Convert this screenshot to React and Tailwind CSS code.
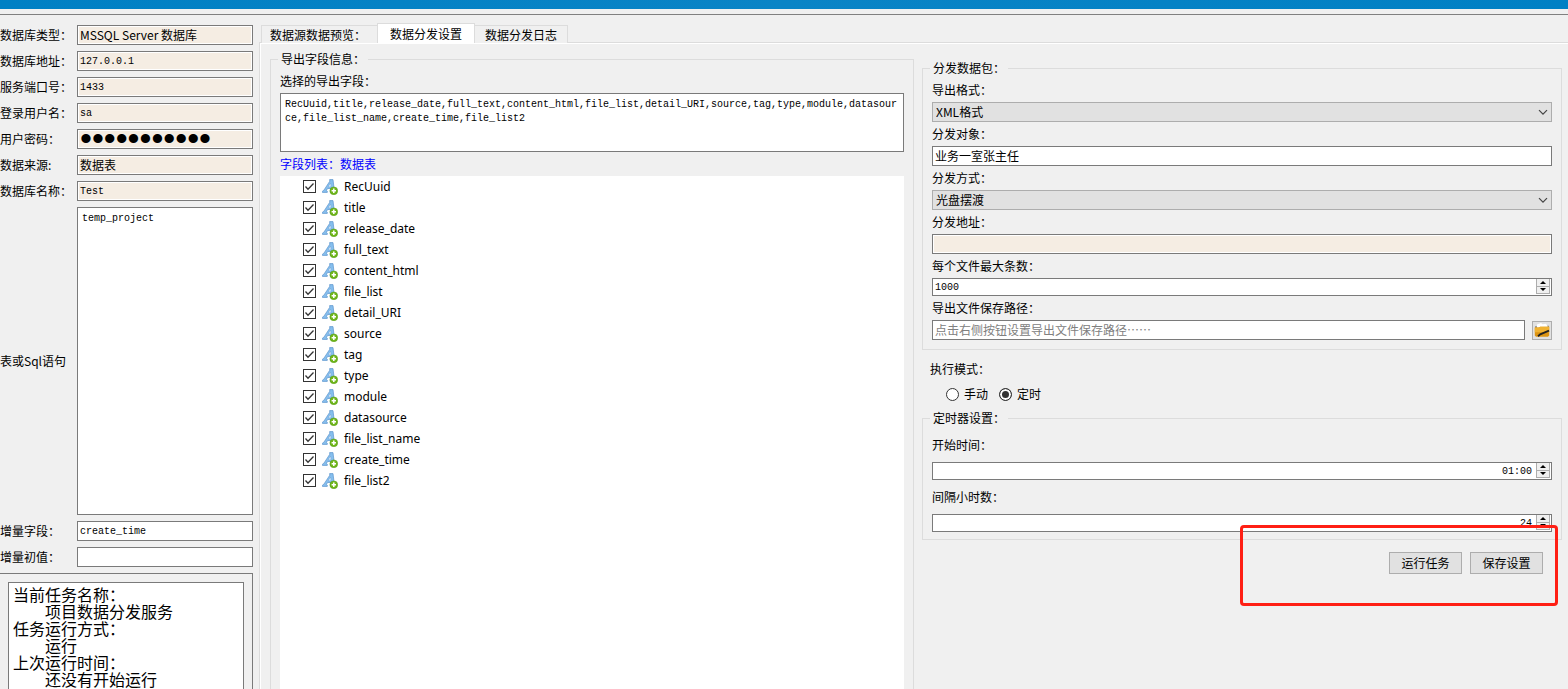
import { useState } from "react";
import clsx from "clsx";

const connectionFields = [
  { id: "dbType", label: "数据库类型：", value: "MSSQL Server 数据库" },
  { id: "dbHost", label: "数据库地址：", value: "127.0.0.1", mono: true },
  { id: "dbPort", label: "服务端口号：", value: "1433", mono: true },
  { id: "dbUser", label: "登录用户名：", value: "sa", mono: true },
  { id: "dbPassword", label: "用户密码：", value: "12345678901", type: "password" },
  { id: "dbSource", label: "数据来源:", value: "数据表" },
  { id: "dbName", label: "数据库名称：", value: "Test", mono: true },
];

const exportFields = [
  "RecUuid",
  "title",
  "release_date",
  "full_text",
  "content_html",
  "file_list",
  "detail_URI",
  "source",
  "tag",
  "type",
  "module",
  "datasource",
  "file_list_name",
  "create_time",
  "file_list2",
];

const taskStatus = [
  { title: "当前任务名称：", value: "项目数据分发服务" },
  { title: "任务运行方式：", value: "运行" },
  { title: "上次运行时间：", value: "还没有开始运行" },
];

const tabs = [
  { name: "数据源数据预览：", className: "h-[18px] border-l pl-2 pr-[11px]" },
  { name: "数据分发设置", className: "h-5 px-3" },
  { name: "数据分发日志", className: "h-[18px] border-r px-[10px]" },
];

const MONO = "font-['Liberation_Mono','Noto_Sans_CJK_SC',monospace] text-[10px]";
const LABEL = "block leading-[18px]";

function TextField({ className, mono, readOnly, ...props }) {
  return (
    <input
      {...props}
      readOnly={readOnly}
      className={clsx(
        "block h-5 w-full min-w-0 border border-[#7a7a7a] px-[2px] outline-none placeholder:text-[#808080]",
        readOnly ? "bg-[#f5ede3] shadow-[inset_0_0_0_1px_#fff]" : "bg-white",
        mono ? [MONO, "pt-px"] : "pb-[2px]",
        className
      )}
    />
  );
}

function SelectField({ id, options }) {
  return (
    <div className="relative">
      <select
        id={id}
        className="block h-5 w-full appearance-none border border-[#adadad] bg-[#e1e1e1] px-[3px] leading-[18px] outline-none"
      >
        {options.map((option) => (
          <option key={option}>{option}</option>
        ))}
      </select>
      <svg
        className="pointer-events-none absolute right-1 top-[7px]"
        width="10"
        height="7"
        viewBox="0 0 10 7"
        fill="none"
        stroke="#444"
        strokeWidth="1.2"
      >
        <path d="M1 1.2 5 5.2 9 1.2" />
      </svg>
    </div>
  );
}

function SpinField({ id, defaultValue, alignRight }) {
  return (
    <div className="flex h-[18px] border border-[#7a7a7a] bg-white pb-px pr-px">
      <input
        id={id}
        defaultValue={defaultValue}
        className={clsx(
          "min-w-0 flex-1 bg-transparent px-[2px] pt-[2px] outline-none",
          MONO,
          alignRight && "pr-1 text-right"
        )}
      />
      <div className="flex w-[14px] flex-col border-x border-b border-[#adadad] bg-[#f0f0f0]">
        <button type="button" aria-label="增加" className="flex flex-1 items-center justify-center">
          <svg width="6" height="3" viewBox="0 0 6 3">
            <path d="M0 3 3 0 6 3Z" />
          </svg>
        </button>
        <button
          type="button"
          aria-label="减少"
          className="flex flex-1 items-center justify-center border-t border-[#adadad]"
        >
          <svg width="6" height="3" viewBox="0 0 6 3">
            <path d="M0 0 3 3 6 0Z" />
          </svg>
        </button>
      </div>
    </div>
  );
}

function FontAddIcon() {
  return (
    <svg width="16" height="16" viewBox="0 0 16 16">
      <path
        d="M7.6.6H11l1.3 10.6 1.4 1v1.2H8.2v-1.2l1-.8-.2-1.9H5.6l-1.2 1.9.9.8v1.2H.4v-1.2l1.5-1L7.8 2.2Z"
        fill="#86bfee"
        stroke="#5b93cb"
        strokeWidth=".7"
      />
      <path d="M8.6 4 6.4 7.8h2.5Z" fill="#fff" stroke="#5b93cb" strokeWidth=".4" />
      <circle cx="11.8" cy="11.8" r="3.9" fill="#70b61a" stroke="#539a10" strokeWidth=".5" />
      <path d="M11.8 9.6V14M9.6 11.8H14" stroke="#fff" strokeWidth="1.5" />
    </svg>
  );
}

function FolderIcon() {
  return (
    <svg width="16" height="16" viewBox="0 0 16 16">
      <path d="M1 4.2h2v2H1ZM13 3.8h2v2h-2Z" fill="#8a8a8a" />
      <path d="M3 2.6 7 1l1.5 1.2 3.5-.4 1.6 2.4V8H3Z" fill="#fff" />
      <path d="M.8 5.6h4l1.4-.8h9v8.8l-1.2 1.2H2L.8 13.6Z" fill="#dc9413" />
      <path d="M.8 5.6h4l1.4-.8h9v5.4H.8Z" fill="#f0b232" />
      <path d="M4 14.2 6.2 12.4 15 8.6" fill="none" stroke="#222" strokeWidth="1.8" />
    </svg>
  );
}

function FieldItem({ name }) {
  const [checked, setChecked] = useState(true);

  return (
    <li>
      <label className="flex h-[21px] items-center pl-[23px] font-['Noto_Sans',sans-serif] text-[12px]">
        <input
          type="checkbox"
          checked={checked}
          onChange={() => setChecked(!checked)}
          className="peer size-[13px] appearance-none border border-[#333] bg-white"
        />
        <svg
          className="pointer-events-none invisible -ml-[13px] peer-checked:visible"
          width="13"
          height="13"
          viewBox="0 0 13 13"
          fill="none"
          stroke="#333"
          strokeWidth="1.3"
        >
          <path d="M2.5 6.5 5 9.2 10.5 3.5" />
        </svg>
        <span className="ml-[6px] mr-[6px]">
          <FontAddIcon />
        </span>
        {name}
      </label>
    </li>
  );
}

function Group({ title, className, children }) {
  return (
    <fieldset className={clsx("min-w-0 border border-[#dcdcdc] px-[7px]", className)}>
      <legend className="px-[3px] leading-[18px]">{title}</legend>
      {children}
    </fieldset>
  );
}

function ConnectionPanel() {
  return (
    <aside className="flex w-[253px] shrink-0 flex-col gap-[6px] pt-[10px]">
      {connectionFields.map(({ id, label, ...field }) => (
        <div key={id} className="flex items-center">
          <label htmlFor={id} className="w-[77px] shrink-0 whitespace-nowrap">
            {label}
          </label>
          <TextField
            id={id}
            name={id}
            type={field.type || "text"}
            defaultValue={field.value}
            mono={field.mono}
            readOnly
            className={field.type === "password" && "font-['Liberation_Sans',sans-serif] text-[34px]"}
          />
        </div>
      ))}
      <div className="flex items-center">
        <label htmlFor="sql" className="w-[77px] shrink-0 whitespace-nowrap">
          表或Sql语句
        </label>
        <textarea
          id="sql"
          defaultValue="temp_project"
          className={clsx(
            "block h-[308px] w-full min-w-0 resize-none border border-[#7a7a7a] bg-white px-1 py-1 leading-[14px] outline-none",
            MONO
          )}
        />
      </div>
      <div className="flex items-center">
        <label htmlFor="incField" className="w-[77px] shrink-0">
          增量字段：
        </label>
        <TextField id="incField" defaultValue="create_time" mono />
      </div>
      <div className="flex items-center">
        <label htmlFor="incValue" className="w-[77px] shrink-0">
          增量初值：
        </label>
        <TextField id="incValue" mono />
      </div>
      <div className="flex min-h-0 flex-1 flex-col border-r border-t border-[#7a7a7a] px-2 pt-2">
        <div className="min-h-0 flex-1 overflow-hidden border border-b-0 border-[#7a7a7a] bg-white px-1 pt-[3px] text-[16px] leading-[17px]">
          {taskStatus.map((item) => (
            <div key={item.title}>
              <p>{item.title}</p>
              <p className="pl-8">{item.value}</p>
            </div>
          ))}
        </div>
      </div>
    </aside>
  );
}

function ExportPanel() {
  return (
    <Group title="导出字段信息：" className="flex min-h-0 flex-col border-b-0">
      <div className="flex min-h-0 flex-1 flex-col gap-[3px] px-[2px] pt-1">
        <label htmlFor="selected" className={LABEL}>
          选择的导出字段：
        </label>
        <textarea
          id="selected"
          value={exportFields.join(",")}
          readOnly
          className={clsx(
            "block h-[59px] w-full shrink-0 resize-none overflow-hidden break-all border border-[#7a7a7a] bg-white px-1 py-1 leading-[14px] outline-none",
            MONO
          )}
        />
        <p className={clsx(LABEL, "text-[#0000ff]")}>字段列表：数据表</p>
        <ul className="flex-1 bg-white">
          {exportFields.map((name) => (
            <FieldItem key={name} name={name} />
          ))}
        </ul>
      </div>
    </Group>
  );
}

function ModeRadio({ label, checked, onChange }) {
  return (
    <label className="flex h-[18px] items-center gap-[5px]">
      <input
        type="radio"
        name="mode"
        checked={checked}
        onChange={onChange}
        className="size-[13px] appearance-none rounded-full border border-[#333] bg-white checked:bg-[#333] checked:shadow-[inset_0_0_0_2px_#fff]"
      />
      {label}
    </label>
  );
}

function DistributePanel() {
  const [mode, setMode] = useState("定时");

  return (
    <div className="min-w-0 pt-[9px]">
      <Group title="分发数据包：">
        <div className="flex flex-col gap-[3px] px-[2px] pb-[9px] pt-1">
          <label htmlFor="format" className={LABEL}>导出格式：</label>
          <SelectField id="format" options={["XML格式"]} />
          <label htmlFor="target" className={LABEL}>分发对象：</label>
          <TextField id="target" defaultValue="业务一室张主任" />
          <label htmlFor="method" className={LABEL}>分发方式：</label>
          <SelectField id="method" options={["光盘摆渡"]} />
          <label htmlFor="address" className={LABEL}>分发地址：</label>
          <TextField id="address" readOnly />
          <label htmlFor="maxRows" className={LABEL}>每个文件最大条数：</label>
          <SpinField id="maxRows" defaultValue="1000" />
          <label htmlFor="path" className={LABEL}>导出文件保存路径：</label>
          <div className="flex items-center gap-[7px]">
            <TextField id="path" placeholder="点击右侧按钮设置导出文件保存路径……" />
            <button
              type="button"
              aria-label="选择路径"
              className="flex h-[19px] w-5 shrink-0 items-center justify-center border border-[#adadad] bg-[#e1e1e1]"
            >
              <FolderIcon />
            </button>
          </div>
        </div>
      </Group>

      <div className="px-2 pb-[6px] pt-[10px]" role="radiogroup" aria-labelledby="modeLabel">
        <p id="modeLabel" className={LABEL}>执行模式：</p>
        <div className="mt-[7px] flex gap-[11px] pl-4">
          {["手动", "定时"].map((name) => (
            <ModeRadio key={name} label={name} checked={mode === name} onChange={() => setMode(name)} />
          ))}
        </div>
      </div>

      <div className="relative">
        <Group title="定时器设置：">
          <div className="flex flex-col gap-2 px-[2px] pb-[7px] pt-[9px]">
            <label htmlFor="startTime" className={LABEL}>开始时间：</label>
            <SpinField id="startTime" defaultValue="01:00" alignRight />
            <label htmlFor="interval" className={LABEL}>间隔小时数：</label>
            <SpinField id="interval" defaultValue="24" alignRight />
          </div>
        </Group>
        <div className="flex justify-end gap-2 pr-[19px] pt-3">
          {["运行任务", "保存设置"].map((name) => (
            <button
              key={name}
              type="button"
              className="h-[22px] w-[73px] border border-[#adadad] bg-[#e1e1e1]"
            >
              {name}
            </button>
          ))}
        </div>
        {/* highlight around the action buttons */}
        <div className="pointer-events-none absolute -bottom-8 right-1 h-[81px] w-[318px] rounded-[4px] border-3 border-[#ff1f14]" />
      </div>
    </div>
  );
}

export default function App() {
  const [tab, setTab] = useState("数据分发设置");

  return (
    <div className="flex h-screen flex-col overflow-hidden bg-[#f0f0f0] font-['Noto_Sans_CJK_SC',sans-serif] text-[12px] leading-[18px] text-black">
      <header className="h-[9px] shrink-0 bg-linear-to-r from-[#0080c4] via-[#0a84c6] to-[#0080c4]" />
      <main className="mt-[5px] flex min-h-0 flex-1 gap-[6px] border-t border-[#808080]">
        <ConnectionPanel />
        <section className="flex min-w-0 flex-1 flex-col pt-2">
          <div role="tablist" className="relative z-10 -mb-px flex items-end pl-[2px]">
            {tabs.map(({ name, className }) => (
              <button
                key={name}
                type="button"
                role="tab"
                aria-selected={tab === name}
                onClick={() => setTab(name)}
                className={clsx(
                  "border-t border-[#dcdcdc]",
                  className,
                  tab === name ? "border-x bg-white" : "bg-[#f0f0f0]"
                )}
              >
                {name}
              </button>
            ))}
          </div>
          <div className="flex min-h-0 flex-1 flex-col border-l border-t border-[#dcdcdc]">
            <div className="grid min-h-0 flex-1 grid-cols-[minmax(0,644fr)_minmax(0,640fr)] gap-2 border-l border-t border-white pl-[9px] pr-[6px] pt-[6px]">
              <ExportPanel />
              <DistributePanel />
            </div>
          </div>
        </section>
      </main>
    </div>
  );
}
